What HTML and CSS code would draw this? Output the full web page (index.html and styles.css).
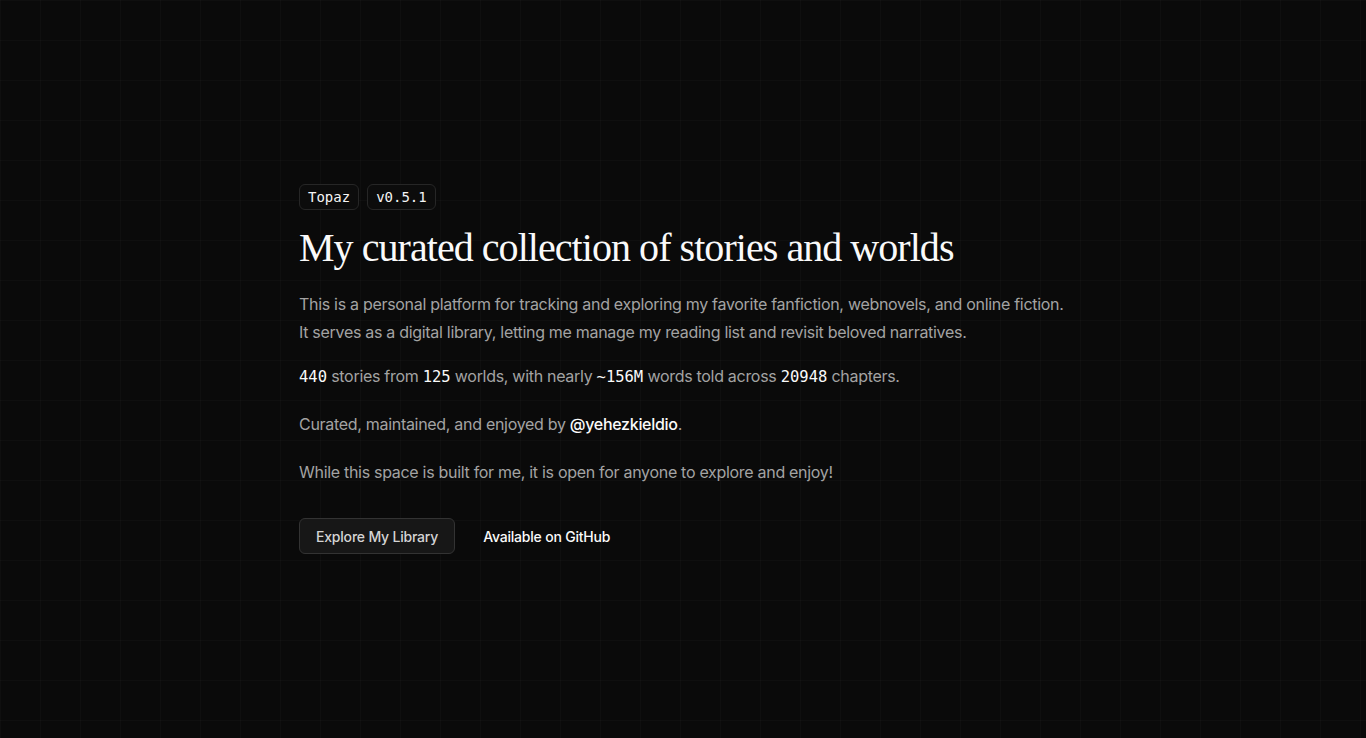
FILE: index.html
```html
<!DOCTYPE html>
<html lang="en">
<head>
<meta charset="utf-8">
<title>Topaz</title>
<link rel="stylesheet" href="styles.css">
</head>
<body>
<main class="page">
  <section class="hero">
    <div class="badges">
      <span class="badge">Topaz</span>
      <span class="badge">v0.5.1</span>
    </div>
    <h1 class="title">My curated collection of stories and worlds</h1>
    <p class="lead">This is a personal platform for tracking and exploring my favorite fanfiction, webnovels, and online fiction. It serves as a digital library, letting me manage my reading list and revisit beloved narratives.</p>
    <p class="stats"><span class="num">440</span> stories from <span class="num">125</span> worlds, with nearly <span class="num">~156M</span> words told across <span class="num">20948</span> chapters.</p>
    <p class="text">Curated, maintained, and enjoyed by <a class="handle" href="#">@yehezkieldio</a>.</p>
    <p class="text">While this space is built for me, it is open for anyone to explore and enjoy!</p>
    <div class="actions">
      <a class="btn btn-outline" href="#">Explore My Library</a>
      <a class="btn btn-ghost" href="#">Available on GitHub</a>
    </div>
  </section>
</main>
</body>
</html>
```
FILE: styles.css
```css
* { box-sizing: border-box; }
html, body { height: 100%; }
body {
  margin: 0;
  background-color: #0a0a0a;
  background-image:
    linear-gradient(to right, rgba(255,255,255,0.018) 1px, transparent 1px),
    linear-gradient(to bottom, rgba(255,255,255,0.018) 1px, transparent 1px);
  background-size: 40px 40px;
  color: #a3a3a3;
  font-family: Inter, "Noto Sans", sans-serif;
  -webkit-font-smoothing: antialiased;
}
.page {
  min-height: 100%;
  display: flex;
  align-items: center;
  justify-content: center;
  padding: 0 16px;
}
.hero {
  width: 768px;
  max-width: 100%;
}
.badges {
  display: flex;
  gap: 8px;
}
.badge {
  display: inline-block;
  border: 1px solid #262626;
  border-radius: 6px;
  padding: 2px 8px;
  font-family: "DejaVu Sans Mono", "Liberation Mono", monospace;
  font-size: 14px;
  line-height: 20px;
  color: #f5f5f5;
  background: #0c0c0c;
}
.title {
  margin: 14px 0 18px;
  font-family: "Liberation Serif", "DejaVu Serif", serif;
  font-weight: 400;
  font-size: 40px;
  line-height: 48px;
  letter-spacing: -0.95px;
  color: #fafafa;
}
.lead, .stats, .text {
  margin: 0 0 20px;
  font-size: 16px;
  line-height: 28px;
  letter-spacing: -0.3px;
}
.lead { margin-bottom: 16px; }
.stats { margin-bottom: 19px; }
.num {
  font-family: "DejaVu Sans Mono", "Liberation Mono", monospace;
  font-size: 15.5px;
  letter-spacing: 0;
  color: #fafafa;
}
.handle {
  color: #fafafa;
  font-weight: 500;
  text-decoration: none;
}
.actions {
  display: flex;
  align-items: center;
  gap: 12px;
  margin-top: 32px;
}
.btn {
  display: inline-flex;
  align-items: center;
  height: 36px;
  padding: 0 16px;
  border-radius: 6px;
  font-size: 14px;
  font-weight: 500;
  letter-spacing: -0.2px;
  text-decoration: none;
}
.btn-outline {
  border: 1px solid #333333;
  background: #171717;
  color: #d4d4d4;
}
.btn-ghost {
  color: #fafafa;
}
```
